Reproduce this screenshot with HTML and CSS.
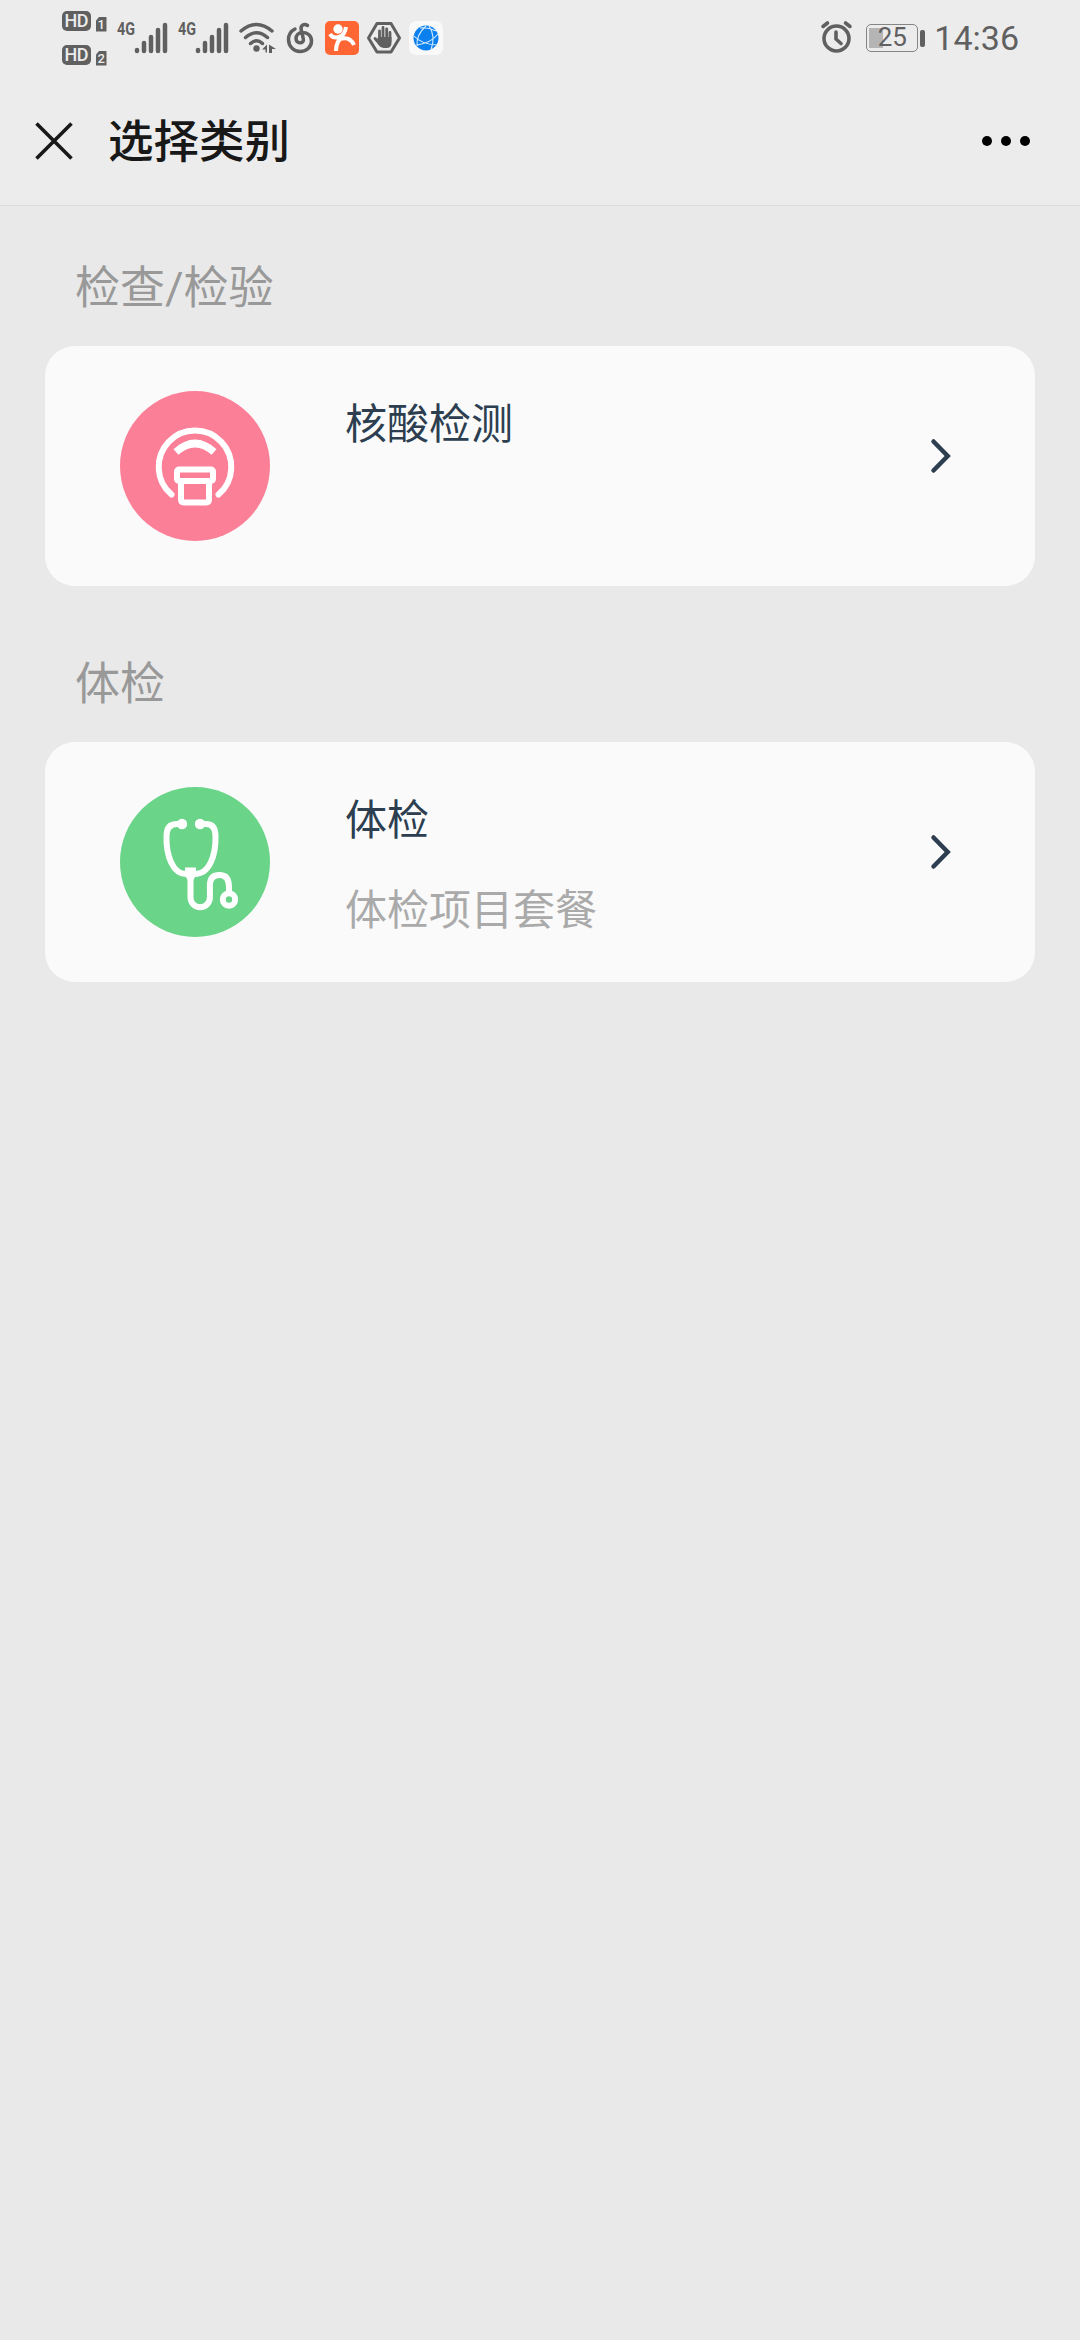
FILE: index.html
```html
<!DOCTYPE html>
<html lang="zh-CN">
<head>
  <meta charset="UTF-8">
  <meta name="viewport" content="width=device-width, initial-scale=1.0">
  <title>选择类别</title>
  <link rel="stylesheet" href="styles.css">
</head>
<body>
  <div class="status-bar">
    <div class="status-left">
      <svg class="hd" width="45" height="56" viewBox="0 0 45 56">
        <rect x="0" y="1" width="29" height="20" rx="5"/>
        <text x="14.5" y="17.2" textLength="24">HD</text>
        <path d="M37 7h7.5v14.500h-10.500v-11z"/>
        <text class="sim" x="39.200" y="19">1</text>
        <rect x="0" y="35" width="29" height="20" rx="5"/>
        <text x="14.5" y="51.2" textLength="24">HD</text>
        <path d="M37 41h7.500v14.500h-10.500v-11z"/>
        <text class="sim" x="39.200" y="53">2</text>
      </svg>
      <svg class="signal" width="51" height="34" viewBox="0 0 51 34">
        <text x="0" y="14" textLength="18" lengthAdjust="spacingAndGlyphs">4G</text>
        <path d="M20 29v1M27 22v8M34 16v14M41 9v21M48 4v26"/>
      </svg>
      <svg class="signal" width="51" height="34" viewBox="0 0 51 34">
        <text x="0" y="14" textLength="18" lengthAdjust="spacingAndGlyphs">4G</text>
        <path d="M20 29v1M27 22v8M34 16v14M41 9v21M48 4v26"/>
      </svg>
      <svg class="wifi" width="39" height="34" viewBox="0 0 39 34">
        <path class="line" d="M2 10Q17.500-3 33 10M6.500 16.500Q17.500 7 28.500 16.500M11.500 22.500Q17.500 17 23.500 22.500"/>
        <circle cx="17.500" cy="27.500" r="3.200"/>
        <path d="M28 23.500v8h-1.500v-3h-3.500zM30 23.500l7 4.500h-4v4h-3z"/>
      </svg>
      <svg class="music" width="28" height="34" viewBox="0 0 28 34">
        <path d="M8 8C4 10 1.500 14 1.500 18.500C1.500 25.500 7 30.500 13 30.500C19.500 30.500 24.500 26 24.500 20C24.500 14.500 20.500 11.500 16 11.500C11 11.500 9 14.500 9 17.500C9 20 10.500 21.800 13 21.800C15.500 21.800 16.800 20 16.300 17.800L14.300 9C13 4.500 17 2 20.500 4.500"/>
      </svg>
      <svg class="dianping" width="34" height="34" viewBox="0 0 34 34">
        <rect width="34" height="34" rx="5"/>
        <circle cx="13" cy="8" r="4.700"/>
        <path d="M5 13Q8 18 14 16Q20 14 21 6M18 15Q11 20 11 30M15 18Q25 15 29 24"/>
      </svg>
      <svg class="hand" width="34" height="34" viewBox="0 0 34 34">
        <path class="edge" d="M10 2.500h14l8.500 14.500l-8.500 14h-14l-8.500-14z"/>
        <path class="finger" d="M12.500 19v-9M16 18v-11.500M19.700 18v-10M23 20v-8.500M12 22l-4-4.500"/>
        <path d="M11 16h13.500v6q0 5-5 5h-3q-3 0-5-3l-2-4z"/>
      </svg>
      <svg class="globe" width="34" height="34" viewBox="0 0 34 34">
        <rect width="34" height="34" rx="7"/>
        <circle cx="17" cy="17" r="12.500"/>
        <path d="M11 7Q19 6 27 10M20 5Q27 15 22 29M17 5Q7 14 8 25M5 15Q12 23 28 24M8 24Q22 22 29 13"/>
      </svg>
    </div>
    <div class="status-right">
      <svg class="alarm" width="32" height="34" viewBox="0 0 32 34">
        <circle cx="15.500" cy="17.500" r="12.500"/>
        <path d="M15 11v7l5 4.500M2 5.500l4.500-3.500M29 5.500l-4.500-3.500"/>
      </svg>
      <div class="battery">
        <div class="battery-body"><span>25</span></div>
        <div class="battery-cap"></div>
      </div>
      <div class="time">14:36</div>
    </div>
  </div>

  <header class="nav">
    <svg class="close" width="38" height="38" viewBox="0 0 38 38"><path d="M1.500 1.500l35 35M36.500 1.500l-35 35"/></svg>
    <h1>选择类别</h1>
    <div class="more"><i></i><i></i><i></i></div>
  </header>

  <main>
    <section>
      <h2>检查/检验</h2>
      <div class="card">
        <svg class="icon pink" width="150" height="150" viewBox="0 0 150 150">
          <circle cx="75" cy="75" r="75"/>
          <path d="M51.500 103.500A36.300 36.300 0 1 1 98.500 103.500"/>
          <path class="brow" d="M56 61Q75 44 94 61"/>
          <rect x="57" y="78.500" width="36" height="11.500" rx="2"/>
          <path d="M61 91v17q0 3.500 3 3.500h22q3 0 3-3.500v-17"/>
        </svg>
        <div class="text">
          <div class="name">核酸检测</div>
        </div>
        <svg class="arrow" width="20" height="34" viewBox="0 0 20 34"><path d="M2.500 2.500l14.200 14.500l-14.200 14.500"/></svg>
      </div>
    </section>

    <section>
      <h2>体检</h2>
      <div class="card">
        <svg class="icon green" width="150" height="150" viewBox="0 0 150 150">
          <circle cx="75" cy="75" r="75"/>
          <path d="M62 37H57Q46.500 37 46.500 49C46 69 53 87 66 87H75C89 87 96 69 95.500 49Q95.500 37 86 37H80"/>
          <path d="M70.500 86v24.500a9.700 9.700 0 0 0 19.400 0V98Q90 88 99.500 88Q109 88 109 100v5"/>
          <circle class="dot" cx="62" cy="37" r="5.200"/>
          <circle class="dot" cx="80" cy="37" r="5.200"/>
          <path class="dot" d="M65 80.500h11v8l-3 5h-5l-3-5z"/>
          <circle class="ring" cx="109" cy="112.500" r="6.200"/>
        </svg>
        <div class="text">
          <div class="name">体检</div>
          <div class="info">体检项目套餐</div>
        </div>
        <svg class="arrow" width="20" height="34" viewBox="0 0 20 34"><path d="M2.500 2.500l14.200 14.500l-14.200 14.500"/></svg>
      </div>
    </section>
  </main>
</body>
</html>
```
FILE: styles.css
```css
* {
  box-sizing: border-box;
}
body {
  margin: 0;
  min-height: 2340px;
  background: #e9e9e9;
  font-family: Roboto, "Noto Sans CJK SC", sans-serif;
}
svg {
  display: block;
  flex: none;
  overflow: visible;
}

/* status bar */
.status-bar {
  display: flex;
  justify-content: space-between;
  height: 76px;
  padding: 0 61px 0 62px;
  background: #ececec;
  color: #606060;
}
.status-left, .status-right {
  display: flex;
  align-items: center;
}
.status-left svg { fill: #606060; }
.hd { margin-right: 10px; }
.hd text {
  fill: #ececec;
  font-size: 18px;
  font-weight: 500;
  text-anchor: middle;
}
.hd .sim { font-size: 13px; }
.signal { margin-right: 10px; }
.signal text {
  font-size: 19px;
  font-weight: 700;
}
.signal path {
  stroke: #606060;
  stroke-width: 4.5;
  stroke-linecap: round;
}
.wifi { margin-right: 9px; }
.wifi .line {
  fill: none;
  stroke: #606060;
  stroke-width: 3.5;
  stroke-linecap: round;
}
.music { margin-right: 10px; }
.music path {
  fill: none;
  stroke: #606060;
  stroke-width: 3.5;
  stroke-linecap: round;
}
.dianping { margin-right: 8px; }
.dianping rect { fill: #ff6633; }
.dianping circle { fill: #fff; }
.dianping path {
  fill: none;
  stroke: #fff;
  stroke-width: 4;
}
.hand { margin-right: 8px; }
.hand .edge {
  fill: none;
  stroke: #606060;
  stroke-width: 3;
  stroke-linejoin: round;
}
.hand .finger {
  stroke: #606060;
  stroke-width: 2.8;
  stroke-linecap: round;
}
.globe rect { fill: #f9f9f9; }
.globe circle { fill: #0b80ee; }
.globe path {
  fill: none;
  stroke: #d8ecff;
  stroke-width: 1.1;
}
.alarm {
  fill: none;
  stroke: #606060;
  stroke-width: 3.6;
  stroke-linecap: round;
  margin-right: 13px;
}
.battery {
  display: flex;
  align-items: center;
  gap: 2px;
  margin-right: 9px;
}
.battery-body {
  width: 52px;
  height: 28px;
  padding: 2px;
  border: 1.5px solid #858585;
  border-radius: 5px;
  background: linear-gradient(#b5b5b5, #b5b5b5) 2px 3px / 14px 20px no-repeat;
  font-size: 26px;
  line-height: 21px;
  text-align: center;
}
.battery-cap {
  width: 5px;
  height: 17px;
  border-radius: 2px;
  background: #606060;
}
.time {
  font-size: 34px;
  line-height: 40px;
}

/* title bar */
.nav {
  display: flex;
  align-items: center;
  height: 130px;
  padding: 0 50px 0 35px;
  border-bottom: 1px solid #dcdcdc;
  background: #ececec;
}
.close {
  fill: none;
  stroke: #181818;
  stroke-width: 3.6;
}
.nav h1 {
  flex: 1;
  margin: 0 0 0 35px;
  padding-top: 4px;
  color: #181818;
  font-size: 45.5px;
  font-weight: 500;
  line-height: 60px;
}
.more {
  display: flex;
  gap: 9px;
}
.more i {
  width: 10px;
  height: 10px;
  border-radius: 50%;
  background: #000;
}

/* list */
main {
  padding: 0 45px;
}
h2 {
  margin: 0;
  padding: 53px 30px 27px;
  color: #999;
  font-size: 45px;
  font-weight: 400;
  line-height: 60px;
}
section + section h2 {
  padding-top: 69px;
}
.card {
  display: flex;
  height: 240px;
  padding: 45px 84px 45px 75px;
  border-radius: 30px;
  background: #fafafa;
}
.icon {
  fill: none;
  stroke: #fff;
  stroke-width: 6;
  stroke-linecap: round;
}
.icon circle { stroke: none; }
.pink circle { fill: #fc7f98; }
.pink .brow {
  stroke-width: 7.5;
  stroke-linecap: butt;
}
.green circle { fill: #6ad488; }
.green .dot {
  fill: #fff;
  stroke: none;
}
.green .ring { stroke: #fff; }
.text {
  flex: 1;
  margin-left: 75px;
  padding-top: 4px;
  font-size: 42px;
  line-height: 60px;
}
.name { color: #2c3e50; }
.info {
  margin-top: 30px;
  color: #aaa;
}
.arrow {
  margin-top: 48px;
  fill: none;
  stroke: #2c3e50;
  stroke-width: 4.5;
  stroke-linecap: round;
}
```
